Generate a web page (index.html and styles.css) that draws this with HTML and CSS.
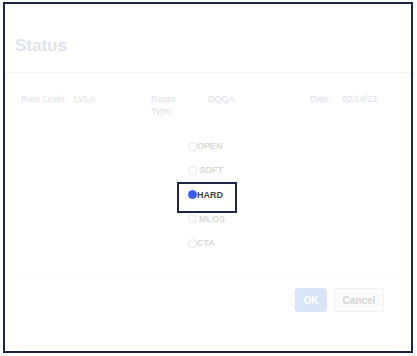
FILE: index.html
```html
<!DOCTYPE html>
<html>
<head>
<meta charset="utf-8">
<link rel="stylesheet" href="styles.css">
</head>
<body>
<div class="frame">
  <div class="header">
    <h1 class="title">Status</h1>
  </div>
  <div class="content">
    <div class="info">
      <span class="lbl">Rate Level:</span>
      <span class="val">LVLA</span>
      <span class="lbl room">Room Type:</span>
      <span class="val">DQQA</span>
      <span class="lbl">Date:</span>
      <span class="val">02/14/23</span>
    </div>
    <div class="radios">
      <label class="opt"><span class="dot"></span><span class="txt">OPEN</span></label>
      <label class="opt"><span class="dot"></span><span class="txt gap">SOFT</span></label>
      <label class="opt sel"><span class="dot on"></span><span class="txt">HARD</span></label>
      <label class="opt"><span class="dot"></span><span class="txt gap">MLOS</span></label>
      <label class="opt"><span class="dot"></span><span class="txt">CTA</span></label>
    </div>
  </div>
  <div class="footer">
    <button class="btn ok">OK</button>
    <button class="btn cancel">Cancel</button>
  </div>
</div>
</body>
</html>
```
FILE: styles.css
```css
* { box-sizing: border-box; }
html, body { margin: 0; padding: 0; background: #fff; }
body { font-family: "Liberation Sans", Arial, sans-serif; }
.frame {
  margin: 2px 0 0 3px;
  width: 410px;
  height: 351px;
  border: 2px solid #1c2545;
  display: flex;
  flex-direction: column;
}
.header {
  padding: 31px 10px 15px;
  border-bottom: 1px solid #f4f5f8;
}
.title {
  margin: 0;
  font-size: 17px;
  line-height: 22px;
  font-weight: bold;
  color: #dfe4ef;
}
.content {
  padding: 20px 16px 0;
}
.info {
  display: grid;
  grid-template-columns: 53px 77px 57px 102px 32px auto;
  font-size: 9px;
  line-height: 12px;
  color: #d9dee9;
}
.room { max-width: 36px; }
.radios {
  margin: 17px 0 0 167px;
  display: flex;
  flex-direction: column;
}
.opt {
  position: relative;
  display: flex;
  align-items: center;
  height: 24.25px;
  font-size: 9px;
  font-weight: bold;
  color: #d8d8d8;
}
.dot {
  width: 9px;
  height: 9px;
  border-radius: 50%;
  border: 1px solid #e3e3e3;
  background: #fff;
}
.dot.on { background: #3b5cf0; border-color: #3b5cf0; }
.txt.gap { margin-left: 2px; }
.sel .txt { color: #474747; }
.sel::after {
  content: "";
  position: absolute;
  left: -11px;
  top: -1px;
  width: 56px;
  height: 27px;
  border: 2px solid #1c2545;
}
.footer {
  margin: auto 14px 0 13px;
  border-top: 1px solid #f6f6f8;
  padding: 13px 13px 39px 0;
  display: flex;
  justify-content: flex-end;
  gap: 7px;
}
.btn {
  height: 24px;
  font-family: "Liberation Sans", Arial, sans-serif;
  font-size: 10px;
  font-weight: bold;
  border-radius: 3px;
  padding: 0;
}
.ok {
  width: 32px;
  background: #dae4f8;
  border: 1px solid #dae4f8;
  color: #fff;
}
.cancel {
  width: 50px;
  background: #fbfbfb;
  border: 1px solid #f1f1f1;
  color: #d4d4d4;
}
```
